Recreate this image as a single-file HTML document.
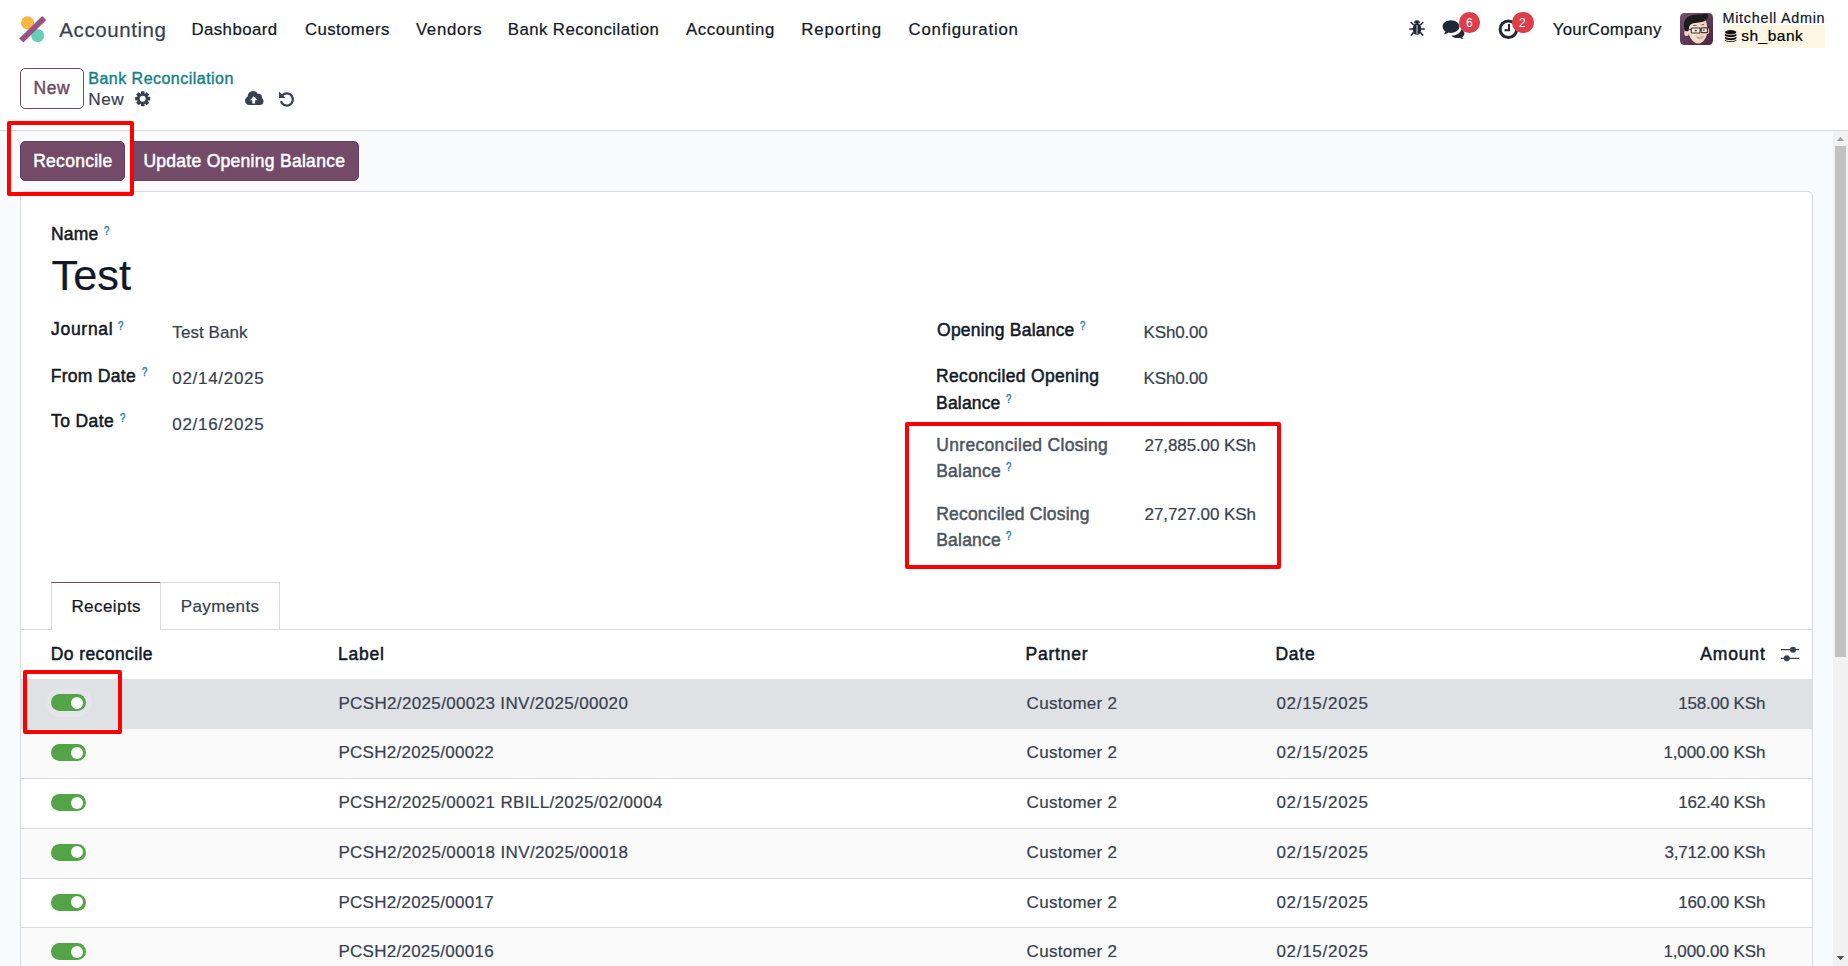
<!DOCTYPE html>
<html lang="en">
<head>
<meta charset="utf-8">
<title>Odoo - Bank Reconcilation</title>
<style>
html,body{margin:0;padding:0;}
html{width:1848px;height:966px;overflow:hidden;}
body{width:1848px;height:966px;overflow:hidden;position:relative;background:#fff;font-family:"Liberation Sans",sans-serif;}
.abs,.t{position:absolute;}
.t{white-space:nowrap;line-height:1;margin:0;padding:0;}
.content{left:0;top:131px;width:1833px;height:835px;background:#f9fafb;}
.cp-border{left:0;top:130px;width:1848px;height:1px;background:#d8dadd;}
.scroll{left:1833px;top:131px;width:15px;height:835px;background:#f1f1f1;}
.thumb{left:1835px;top:146px;width:11px;height:511px;background:#c1c1c1;}
.sheet{left:20px;top:191px;width:1791px;height:773px;border-bottom:none;background:#fff;border:1px solid #d8dadd;border-radius:5px 5px 0 0;}
.btn-new{left:20px;top:68px;width:62px;height:39px;border:1px solid #714B67;border-radius:5px;background:#fff;}
.btn-p{top:141px;height:40px;background:#734b69;border-radius:5px;box-sizing:border-box;border:1px solid #673f5e;}
.redbox{border:4px solid #ff0000;border-radius:2px;box-sizing:border-box;}
.tabline{left:21px;top:629px;width:1791px;height:1px;background:#d8dadd;}
.tab{top:582px;height:47px;box-sizing:border-box;}
.row{left:21px;width:1791px;}
.tog{left:51px;width:35px;height:17px;border-radius:9px;background:#52a447;}
.tog i{position:absolute;right:3px;top:2.5px;width:12px;height:12px;border-radius:50%;background:#fff;}
.badge{width:21.600px;height:20.600px;border-radius:10.300px;background:#dc3f49;top:12px;}
svg{position:absolute;overflow:visible;}
</style>
</head>
<body>
<!-- ===== main navbar ===== -->
<header class="abs" style="left:0;top:0;width:1848px;height:57px;background:#fff;"></header>
<svg style="left:18px;top:15px;" width="30" height="30" viewBox="18 15 30 30">
  <circle cx="27.6" cy="22.8" r="6.6" fill="#f9b642"/>
  <circle cx="37.7" cy="35.7" r="6.6" fill="#69d0b8"/>
  <path d="M19.3 38.6 L42.2 15.9 L46.2 20 L23.4 42.6 Z" fill="#985184"/>
</svg>
<!-- bug -->
<svg style="left:1409px;top:19px;" width="16" height="17" viewBox="0 0 16 17" fill="#1f2937">
  <ellipse cx="8" cy="10" rx="4.3" ry="6"/>
  <path d="M5 4.2a3 3 0 0 1 6 0z"/>
  <path d="M0.3 9.2h4v1.6h-4zM11.7 9.2h4v1.6h-4zM1.2 3.6l1.1-1.1 3 3-1.1 1.1zM14.8 3.6l-1.1-1.1-3 3 1.1 1.1zM1.2 16l1.1 1.1 3-3.2-1.1-1.1zM14.8 16l-1.1 1.1-3-3.2 1.1-1.1z"/>
  <rect x="7.600" y="6" width="0.800" height="9.500" fill="#fff"/>
</svg>
<!-- chat -->
<svg style="left:1442px;top:20px;" width="24" height="19" viewBox="0 0 24 19" fill="#1f2937">
  <path d="M9 0.3c4.7 0 8.4 2.8 8.4 6.3s-3.7 6.3-8.4 6.3c-0.9 0-1.8-0.1-2.6-0.3c-1.3 1-2.9 1.6-4.6 1.7c0.8-0.8 1.4-1.8 1.6-2.9C1.7 10.200.6 8.500.6 6.600C0.600 3.100 4.300 0.300 9 0.300z"/>
  <path d="M19.3 9.2c1.900 1 3.100 2.600 3.100 4.400c0 1.500-0.900 2.900-2.300 3.900c0.300 0.600 0.900 1.100 1.600 1.500c-1.500 0-2.900-0.400-4.100-1.200c-0.700 0.100-1.300 0.200-2 0.200c-2.600 0-4.900-0.900-6.300-2.300c5.300-0.100 9.500-2.900 10-6.500z"/>
</svg>
<div class="abs badge" style="left:1458.700px;"></div>
<!-- clock -->
<svg style="left:1498px;top:19px;" width="21" height="21" viewBox="0 0 21 21">
  <circle cx="10.4" cy="10.2" r="8.3" fill="none" stroke="#1f2937" stroke-width="3"/>
  <path d="M11 5v6.200h-4.500" fill="none" stroke="#1f2937" stroke-width="2"/>
</svg>
<div class="abs badge" style="left:1512px;"></div>
<span class="t" style="left:1465.900px;top:17px;font-size:12px;color:#fff;">6</span>
<span class="t" style="left:1518.900px;top:17px;font-size:12px;color:#fff;">2</span>
<!-- avatar -->
<svg style="left:1680px;top:13px;" width="33" height="32" viewBox="0 0 33 32">
  <defs>
    <linearGradient id="avg" x1="0" y1="0" x2="1" y2="1"><stop offset="0" stop-color="#74506c"/><stop offset="1" stop-color="#4b2541"/></linearGradient>
    <linearGradient id="skn" x1="0" y1="0" x2="1" y2="0"><stop offset="0" stop-color="#fbe6d2"/><stop offset="1" stop-color="#f3cfb6"/></linearGradient>
    <clipPath id="avc"><rect x="0" y="0" width="33" height="32" rx="4.500" ry="4.500"/></clipPath>
  </defs>
  <g clip-path="url(#avc)">
    <rect width="33" height="32" fill="url(#avg)"/>
    <ellipse cx="6.600" cy="19.800" rx="2.300" ry="3.300" fill="#f6d9c4"/>
    <ellipse cx="27.500" cy="18" rx="1.500" ry="3" fill="#f0c9b0"/>
    <path d="M8.300 9.500C12 8 22 6.500 25.800 7.300C27 11 27.600 16 27.200 20C26.600 24 24.500 27.500 22 29.300C20 30.800 16.500 31 14.500 29.500C11.500 27.300 9.200 23.500 8.600 19.500C8.200 16 8.100 12.500 8.300 9.500z" fill="url(#skn)"/>
    <path d="M5.200 18C3.800 15 3.500 11 4.600 8C5.800 5 8.500 3 12 2.200C16 1.300 21 1.800 24.500 1C25.500 0.700 26.300 0.300 26.800 0.500C28 1 28.300 2.800 27.800 4.500C27.300 6.300 26 7.600 24.500 8.200C21.500 9.300 16 9.500 12.400 10.400C10.500 11 9.300 13 8.900 15C8.700 16.500 8.800 17.600 8.300 17.900C7.500 18.300 6 18.300 5.200 18z" fill="#1c1c1e"/>
    <path d="M13.200 12.700q1.700-0.700 3.400-0.200M21.400 11.900q1.300-0.600 2.700-0.200" stroke="#2b2220" stroke-width="0.700" fill="none"/>
    <rect x="11.300" y="15" width="8.800" height="5" rx="0.800" fill="#f4ece6" stroke="#3b3a3a" stroke-width="1.200"/>
    <rect x="21.200" y="14.800" width="6.200" height="4.800" rx="0.800" fill="#f4ece6" stroke="#3b3a3a" stroke-width="1.200"/>
    <path d="M20.100 16.600h1.100M8.600 16.200l2.700 0.300" stroke="#3b3a3a" stroke-width="1"/>
    <ellipse cx="15.800" cy="17.600" rx="1.300" ry="0.800" fill="#4a4340"/><ellipse cx="23.800" cy="17.300" rx="1.100" ry="0.800" fill="#4a4340"/>
    <path d="M19.600 21.300q1.200 0.500 2.400 0" stroke="#e4a893" stroke-width="0.700" fill="none"/>
    <path d="M16.200 23.600C18.500 24.800 21.500 24.600 23.600 23.300C22.800 25.400 17.500 25.900 16.200 23.600z" fill="#fafafa" stroke="#8d8a8c" stroke-width="0.500"/>
    <path d="M17.500 25.400q2.200 0.700 4.300-0.200" stroke="#c77b7d" stroke-width="0.600" fill="none"/>
  </g>
</svg>
<div class="abs" style="left:1723px;top:25px;width:102px;height:23px;background:#fdf6e4;"></div>
<!-- database -->
<svg style="left:1725px;top:30px;" width="12" height="12" viewBox="0 0 12 12" fill="#111">
  <ellipse cx="5.700" cy="2.200" rx="5.700" ry="2.200"/>
  <path d="M0 3.700c1.500 1.900 9.900 1.900 11.400 0v2c-1.500 1.900-9.900 1.900-11.400 0z"/>
  <path d="M0 6.700c1.500 1.900 9.900 1.900 11.400 0v2c-1.500 1.900-9.900 1.900-11.400 0z"/>
  <path d="M0 9.700c1.500 1.900 9.900 1.900 11.400 0v0.600c0 2.300-11.400 2.300-11.400 0z"/>
</svg>

<!-- ===== control panel ===== -->
<div class="abs btn-new"></div>
<!-- gear -->
<svg style="left:134.600px;top:91px;" width="15.4" height="15.4" viewBox="-8 -8 16 16">
  <g fill="#374151">
    <g id="tooth"><rect x="-1.900" y="-7.800" width="3.800" height="15.600" rx="0.500"/></g>
    <use href="#tooth" transform="rotate(45)"/><use href="#tooth" transform="rotate(90)"/><use href="#tooth" transform="rotate(135)"/>
    <circle r="5.700"/>
  </g>
  <circle r="3.100" fill="#fff"/>
</svg>
<!-- cloud upload -->
<svg style="left:245px;top:91px;" width="18.500" height="14" viewBox="0 0 18.500 14">
  <g fill="#374151">
    <circle cx="4.300" cy="9.700" r="4.300"/>
    <circle cx="8" cy="5.300" r="5.300"/>
    <circle cx="13.300" cy="6.400" r="3.700"/>
    <circle cx="14.700" cy="10.200" r="3.800"/>
    <rect x="4.300" y="7" width="10.400" height="7"/>
  </g>
  <path d="M8.700 5.300l3.800 3.900h-2.400v3.400h-2.800v-3.400h-2.400z" fill="#fff"/>
</svg>
<!-- undo -->
<svg style="left:279px;top:91px;" width="15" height="15" viewBox="0 0 15 15">
  <path d="M3.400 4.200a6.100 6.100 0 1 1-1.500 5.900" fill="none" stroke="#374151" stroke-width="2.300"/>
  <path d="M0 0.500l0 6.600l6.600 0z" fill="#374151"/>
</svg>
<div class="abs cp-border"></div>

<!-- ===== content ===== -->
<div class="abs content"></div>
<div class="abs scroll"></div>
<div class="abs thumb"></div>
<svg style="left:1833px;top:131px;" width="15" height="835" viewBox="0 0 15 835">
  <path d="M3.800 10l3.700-4l3.700 4z" fill="#a3a3a3"/>
  <path d="M3.800 825l3.700 4.200l3.700-4.200z" fill="#505050"/>
</svg>
<div class="abs btn-p" style="left:20px;width:105px;"></div>
<div class="abs btn-p" style="left:130px;width:229px;"></div>
<main class="abs sheet"></main>

<!-- tabs -->
<div class="abs tabline"></div>
<div class="abs tab" style="left:51px;width:110px;height:48px;background:#fff;border:1px solid #d8dadd;border-bottom:none;border-top:1px solid #714B67;top:582px;"></div>
<div class="abs tab" style="left:160px;width:120px;border:1px solid #d8dadd;border-bottom:none;background:#fff;"></div>

<!-- table rows -->
<div class="abs row" style="top:679px;height:50px;background:#e0e1e5;"></div>
<div class="abs row" style="top:729px;height:49px;background:#fafafa;border-bottom:1px solid #d8dadd;"></div>
<div class="abs row" style="top:779px;height:49px;background:#fff;border-bottom:1px solid #d8dadd;"></div>
<div class="abs row" style="top:829px;height:49px;background:#fafafa;border-bottom:1px solid #d8dadd;"></div>
<div class="abs row" style="top:879px;height:48px;background:#fff;border-bottom:1px solid #d8dadd;"></div>
<div class="abs row" style="top:928px;height:38px;background:#fafafa;"></div>
<div class="abs" style="left:45px;top:687.500px;width:47px;height:29px;border-radius:15px;background:#e4e5e8;"></div>
<div class="abs tog" style="top:694px;"><i></i></div>
<div class="abs tog" style="top:744px;"><i></i></div>
<div class="abs tog" style="top:794px;"><i></i></div>
<div class="abs tog" style="top:843.500px;"><i></i></div>
<div class="abs tog" style="top:893.500px;"><i></i></div>
<div class="abs tog" style="top:943px;"><i></i></div>
<!-- sliders icon -->
<svg style="left:1781px;top:646px;" width="18" height="16" viewBox="0 0 18 16">
  <path d="M0 3.700h18M0 12.300h18" stroke="#374151" stroke-width="1.300"/>
  <circle cx="12" cy="3.700" r="3" fill="#374151"/><circle cx="5.800" cy="12.300" r="3" fill="#374151"/>
</svg>

<!-- ===== text ===== -->
<span class="t" style="left:59.30px;top:20px;font-size:20.5px;color:#374151;letter-spacing:0.586px;-webkit-text-stroke:0.22px #374151;">Accounting</span>
<span class="t" style="left:191.40px;top:22px;font-size:16.8px;color:#111827;letter-spacing:0.455px;-webkit-text-stroke:0.22px #111827;">Dashboard</span>
<span class="t" style="left:304.90px;top:22px;font-size:16.8px;color:#111827;letter-spacing:0.408px;-webkit-text-stroke:0.22px #111827;">Customers</span>
<span class="t" style="left:415.90px;top:22px;font-size:16.8px;color:#111827;letter-spacing:0.702px;-webkit-text-stroke:0.22px #111827;">Vendors</span>
<span class="t" style="left:507.80px;top:22px;font-size:16.8px;color:#111827;letter-spacing:0.428px;-webkit-text-stroke:0.22px #111827;">Bank Reconcilation</span>
<span class="t" style="left:686.00px;top:22px;font-size:16.8px;color:#111827;letter-spacing:0.589px;-webkit-text-stroke:0.22px #111827;">Accounting</span>
<span class="t" style="left:801.20px;top:22px;font-size:16.8px;color:#111827;letter-spacing:0.896px;-webkit-text-stroke:0.22px #111827;">Reporting</span>
<span class="t" style="left:908.50px;top:22px;font-size:16.8px;color:#111827;letter-spacing:0.801px;-webkit-text-stroke:0.22px #111827;">Configuration</span>
<span class="t" style="left:1552.80px;top:22px;font-size:16.8px;color:#111827;letter-spacing:0.276px;-webkit-text-stroke:0.22px #111827;">YourCompany</span>
<span class="t" style="left:1722.50px;top:11px;font-size:14.4px;color:#111827;letter-spacing:0.718px;-webkit-text-stroke:0.22px #111827;">Mitchell Admin</span>
<span class="t" style="left:1741.30px;top:28px;font-size:15.5px;color:#000;letter-spacing:0.475px;-webkit-text-stroke:0.22px #000;">sh_bank</span>
<span class="t" style="left:33.50px;top:80px;font-size:17.5px;color:#714B67;letter-spacing:0.565px;-webkit-text-stroke:0.45px #714B67;">New</span>
<span class="t" style="left:88.30px;top:71px;font-size:16px;color:#13808a;letter-spacing:0.478px;-webkit-text-stroke:0.4px #13808a;">Bank Reconcilation</span>
<span class="t" style="left:88.30px;top:91px;font-size:17.2px;color:#374151;letter-spacing:0.464px;-webkit-text-stroke:0.22px #374151;">New</span>
<span class="t" style="left:33.20px;top:153px;font-size:17.5px;color:#fff;letter-spacing:0.274px;-webkit-text-stroke:0.5px #fff;">Reconcile</span>
<span class="t" style="left:143.40px;top:153px;font-size:17.5px;color:#fff;letter-spacing:0.284px;-webkit-text-stroke:0.5px #fff;">Update Opening Balance</span>
<span class="t" style="left:50.90px;top:226px;font-size:17.5px;color:#111827;letter-spacing:0.184px;-webkit-text-stroke:0.5px #111827;">Name</span>
<span class="t" style="left:104.10px;top:225px;font-size:12px;color:#2b8bb5;transform:scaleX(0.8);transform-origin:0.00px 0;-webkit-text-stroke:0.5px #2b8bb5;">?</span>
<span class="t" style="left:51.60px;top:254px;font-size:43.3px;color:#111827;letter-spacing:0.008px;-webkit-text-stroke:0.22px #111827;">Test</span>
<span class="t" style="left:51.00px;top:321px;font-size:17.5px;color:#111827;letter-spacing:0.715px;-webkit-text-stroke:0.5px #111827;">Journal</span>
<span class="t" style="left:117.90px;top:320px;font-size:12px;color:#2b8bb5;transform:scaleX(0.8);transform-origin:0.00px 0;-webkit-text-stroke:0.5px #2b8bb5;">?</span>
<span class="t" style="left:172.30px;top:324px;font-size:17px;color:#374151;letter-spacing:0.081px;-webkit-text-stroke:0.22px #374151;">Test Bank</span>
<span class="t" style="left:50.70px;top:368px;font-size:17.5px;color:#111827;letter-spacing:0.297px;-webkit-text-stroke:0.5px #111827;">From Date</span>
<span class="t" style="left:141.70px;top:366px;font-size:12px;color:#2b8bb5;transform:scaleX(0.8);transform-origin:0.00px 0;-webkit-text-stroke:0.5px #2b8bb5;">?</span>
<span class="t" style="left:172.30px;top:370px;font-size:17px;color:#374151;letter-spacing:0.697px;-webkit-text-stroke:0.22px #374151;">02/14/2025</span>
<span class="t" style="left:51.00px;top:413px;font-size:17.5px;color:#111827;letter-spacing:0.404px;-webkit-text-stroke:0.5px #111827;">To Date</span>
<span class="t" style="left:119.80px;top:412px;font-size:12px;color:#2b8bb5;transform:scaleX(0.8);transform-origin:0.00px 0;-webkit-text-stroke:0.5px #2b8bb5;">?</span>
<span class="t" style="left:172.30px;top:416px;font-size:17px;color:#374151;letter-spacing:0.697px;-webkit-text-stroke:0.22px #374151;">02/16/2025</span>
<span class="t" style="left:937.10px;top:322px;font-size:17.5px;color:#111827;letter-spacing:0.212px;-webkit-text-stroke:0.5px #111827;">Opening Balance</span>
<span class="t" style="left:1079.90px;top:320px;font-size:12px;color:#2b8bb5;transform:scaleX(0.8);transform-origin:0.00px 0;-webkit-text-stroke:0.5px #2b8bb5;">?</span>
<span class="t" style="left:1143.60px;top:324px;font-size:17px;color:#374151;letter-spacing:-0.177px;-webkit-text-stroke:0.22px #374151;">KSh0.00</span>
<span class="t" style="left:936.10px;top:368px;font-size:17.5px;color:#111827;letter-spacing:0.314px;-webkit-text-stroke:0.5px #111827;">Reconciled Opening</span>
<span class="t" style="left:936.10px;top:395px;font-size:17.5px;color:#111827;letter-spacing:0.165px;-webkit-text-stroke:0.5px #111827;">Balance</span>
<span class="t" style="left:1005.90px;top:393px;font-size:12px;color:#2b8bb5;transform:scaleX(0.8);transform-origin:0.00px 0;-webkit-text-stroke:0.5px #2b8bb5;">?</span>
<span class="t" style="left:1143.60px;top:370px;font-size:17px;color:#374151;letter-spacing:-0.177px;-webkit-text-stroke:0.22px #374151;">KSh0.00</span>
<span class="t" style="left:936.20px;top:437px;font-size:17.5px;color:#4b5563;letter-spacing:0.330px;-webkit-text-stroke:0.5px #4b5563;">Unreconciled Closing</span>
<span class="t" style="left:936.20px;top:463px;font-size:17.5px;color:#4b5563;letter-spacing:0.215px;-webkit-text-stroke:0.5px #4b5563;">Balance</span>
<span class="t" style="left:1005.90px;top:461px;font-size:12px;color:#2b8bb5;transform:scaleX(0.8);transform-origin:0.00px 0;-webkit-text-stroke:0.5px #2b8bb5;">?</span>
<span class="t" style="left:1144.60px;top:437px;font-size:17px;color:#374151;letter-spacing:-0.102px;-webkit-text-stroke:0.22px #374151;">27,885.00 KSh</span>
<span class="t" style="left:936.20px;top:506px;font-size:17.5px;color:#4b5563;letter-spacing:0.202px;-webkit-text-stroke:0.5px #4b5563;">Reconciled Closing</span>
<span class="t" style="left:936.20px;top:532px;font-size:17.5px;color:#4b5563;letter-spacing:0.215px;-webkit-text-stroke:0.5px #4b5563;">Balance</span>
<span class="t" style="left:1005.90px;top:530px;font-size:12px;color:#2b8bb5;transform:scaleX(0.8);transform-origin:0.00px 0;-webkit-text-stroke:0.5px #2b8bb5;">?</span>
<span class="t" style="left:1144.60px;top:506px;font-size:17px;color:#374151;letter-spacing:-0.102px;-webkit-text-stroke:0.22px #374151;">27,727.00 KSh</span>
<span class="t" style="left:71.40px;top:598px;font-size:17px;color:#111827;letter-spacing:0.437px;-webkit-text-stroke:0.22px #111827;">Receipts</span>
<span class="t" style="left:180.70px;top:598px;font-size:17px;color:#374151;letter-spacing:0.388px;-webkit-text-stroke:0.22px #374151;">Payments</span>
<span class="t" style="left:50.80px;top:646px;font-size:17.5px;color:#111827;letter-spacing:0.406px;-webkit-text-stroke:0.5px #111827;">Do reconcile</span>
<span class="t" style="left:338.00px;top:646px;font-size:17.5px;color:#111827;letter-spacing:0.767px;-webkit-text-stroke:0.5px #111827;">Label</span>
<span class="t" style="left:1025.60px;top:646px;font-size:17.5px;color:#111827;letter-spacing:0.757px;-webkit-text-stroke:0.5px #111827;">Partner</span>
<span class="t" style="left:1275.40px;top:646px;font-size:17.5px;color:#111827;letter-spacing:0.756px;-webkit-text-stroke:0.5px #111827;">Date</span>
<span class="t" style="left:1700.20px;top:646px;font-size:17.5px;color:#111827;letter-spacing:0.850px;-webkit-text-stroke:0.5px #111827;">Amount</span>
<span class="t" style="left:338.40px;top:695px;font-size:17px;color:#374151;letter-spacing:0.354px;-webkit-text-stroke:0.22px #374151;">PCSH2/2025/00023 INV/2025/00020</span>
<span class="t" style="left:1026.60px;top:695px;font-size:17px;color:#374151;letter-spacing:0.277px;-webkit-text-stroke:0.22px #374151;">Customer 2</span>
<span class="t" style="left:1276.40px;top:695px;font-size:17px;color:#374151;letter-spacing:0.719px;-webkit-text-stroke:0.22px #374151;">02/15/2025</span>
<span class="t" style="left:1678.20px;top:695px;font-size:17px;color:#374151;letter-spacing:-0.189px;-webkit-text-stroke:0.22px #374151;">158.00 KSh</span>
<span class="t" style="left:338.40px;top:744px;font-size:17px;color:#374151;letter-spacing:0.269px;-webkit-text-stroke:0.22px #374151;">PCSH2/2025/00022</span>
<span class="t" style="left:1026.60px;top:744px;font-size:17px;color:#374151;letter-spacing:0.277px;-webkit-text-stroke:0.22px #374151;">Customer 2</span>
<span class="t" style="left:1276.40px;top:744px;font-size:17px;color:#374151;letter-spacing:0.719px;-webkit-text-stroke:0.22px #374151;">02/15/2025</span>
<span class="t" style="left:1663.40px;top:744px;font-size:17px;color:#374151;letter-spacing:-0.098px;-webkit-text-stroke:0.22px #374151;">1,000.00 KSh</span>
<span class="t" style="left:338.40px;top:794px;font-size:17px;color:#374151;letter-spacing:0.357px;-webkit-text-stroke:0.22px #374151;">PCSH2/2025/00021 RBILL/2025/02/0004</span>
<span class="t" style="left:1026.60px;top:794px;font-size:17px;color:#374151;letter-spacing:0.277px;-webkit-text-stroke:0.22px #374151;">Customer 2</span>
<span class="t" style="left:1276.40px;top:794px;font-size:17px;color:#374151;letter-spacing:0.719px;-webkit-text-stroke:0.22px #374151;">02/15/2025</span>
<span class="t" style="left:1678.20px;top:794px;font-size:17px;color:#374151;letter-spacing:-0.189px;-webkit-text-stroke:0.22px #374151;">162.40 KSh</span>
<span class="t" style="left:338.40px;top:844px;font-size:17px;color:#374151;letter-spacing:0.361px;-webkit-text-stroke:0.22px #374151;">PCSH2/2025/00018 INV/2025/00018</span>
<span class="t" style="left:1026.60px;top:844px;font-size:17px;color:#374151;letter-spacing:0.277px;-webkit-text-stroke:0.22px #374151;">Customer 2</span>
<span class="t" style="left:1276.40px;top:844px;font-size:17px;color:#374151;letter-spacing:0.719px;-webkit-text-stroke:0.22px #374151;">02/15/2025</span>
<span class="t" style="left:1664.40px;top:844px;font-size:17px;color:#374151;letter-spacing:-0.189px;-webkit-text-stroke:0.22px #374151;">3,712.00 KSh</span>
<span class="t" style="left:338.40px;top:894px;font-size:17px;color:#374151;letter-spacing:0.269px;-webkit-text-stroke:0.22px #374151;">PCSH2/2025/00017</span>
<span class="t" style="left:1026.60px;top:894px;font-size:17px;color:#374151;letter-spacing:0.277px;-webkit-text-stroke:0.22px #374151;">Customer 2</span>
<span class="t" style="left:1276.40px;top:894px;font-size:17px;color:#374151;letter-spacing:0.719px;-webkit-text-stroke:0.22px #374151;">02/15/2025</span>
<span class="t" style="left:1678.20px;top:894px;font-size:17px;color:#374151;letter-spacing:-0.189px;-webkit-text-stroke:0.22px #374151;">160.00 KSh</span>
<span class="t" style="left:338.40px;top:943px;font-size:17px;color:#374151;letter-spacing:0.269px;-webkit-text-stroke:0.22px #374151;">PCSH2/2025/00016</span>
<span class="t" style="left:1026.60px;top:943px;font-size:17px;color:#374151;letter-spacing:0.277px;-webkit-text-stroke:0.22px #374151;">Customer 2</span>
<span class="t" style="left:1276.40px;top:943px;font-size:17px;color:#374151;letter-spacing:0.719px;-webkit-text-stroke:0.22px #374151;">02/15/2025</span>
<span class="t" style="left:1663.40px;top:943px;font-size:17px;color:#374151;letter-spacing:-0.098px;-webkit-text-stroke:0.22px #374151;">1,000.00 KSh</span>

<!-- ===== red annotation boxes ===== -->
<div class="abs redbox" style="left:7px;top:121px;width:127px;height:75px;"></div>
<div class="abs redbox" style="left:905px;top:422px;width:376px;height:147px;"></div>
<div class="abs redbox" style="left:23px;top:670px;width:99px;height:64px;"></div>
</body>
</html>
